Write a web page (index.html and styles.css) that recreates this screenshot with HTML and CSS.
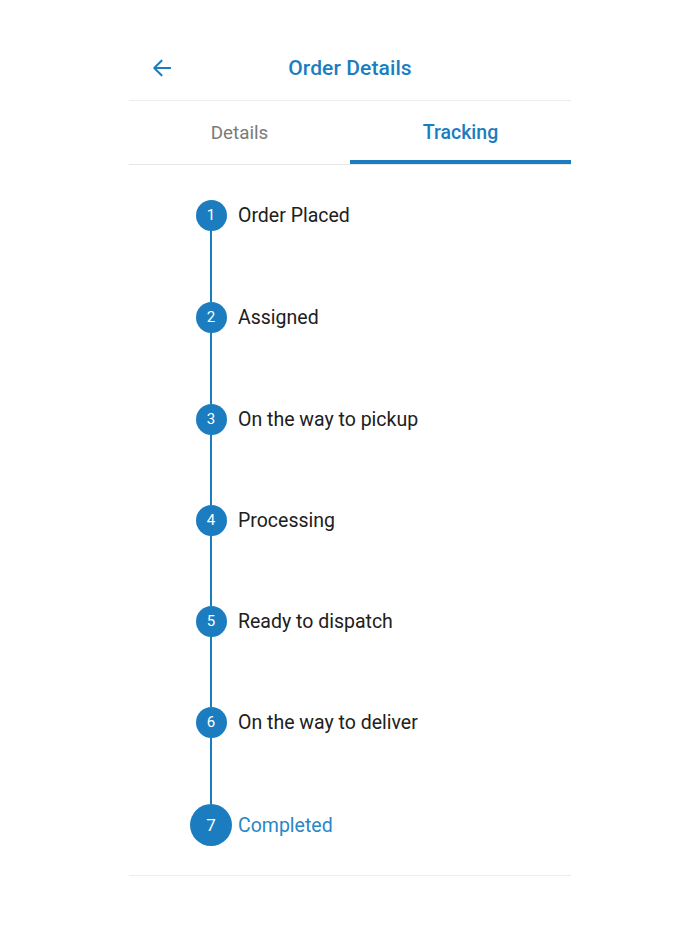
FILE: index.html
```html
<!DOCTYPE html>
<html>
<head>
<meta charset="utf-8">
<link rel="stylesheet" href="styles.css">
</head>
<body>
<div class="screen">
  <header class="topbar">
    <button class="back" aria-label="Back">
      <svg width="22" height="22" viewBox="0 0 24 24" fill="none" stroke="currentColor" stroke-width="2.2" stroke-linecap="round" stroke-linejoin="round"><path d="M21 12H3.5M11.5 4L3.5 12l8 8"/></svg>
    </button>
    <h1 class="title">Order Details</h1>
  </header>
  <nav class="tabs">
    <div class="tab">Details</div>
    <div class="tab active">Tracking</div>
  </nav>
  <ol class="steps">
    <li class="step"><span class="marker"><span class="dot">1</span></span><span class="label">Order Placed</span></li>
    <li class="connector"></li>
    <li class="step"><span class="marker"><span class="dot">2</span></span><span class="label">Assigned</span></li>
    <li class="connector"></li>
    <li class="step"><span class="marker"><span class="dot">3</span></span><span class="label">On the way to pickup</span></li>
    <li class="connector short"></li>
    <li class="step"><span class="marker"><span class="dot">4</span></span><span class="label">Processing</span></li>
    <li class="connector short"></li>
    <li class="step"><span class="marker"><span class="dot">5</span></span><span class="label">Ready to dispatch</span></li>
    <li class="connector short"></li>
    <li class="step"><span class="marker"><span class="dot">6</span></span><span class="label">On the way to deliver</span></li>
    <li class="connector last"></li>
    <li class="step current"><span class="marker"><span class="dot">7</span></span><span class="label">Completed</span></li>
  </ol>
</div>
</body>
</html>
```
FILE: styles.css
```css
* { box-sizing: border-box; }
html, body { margin: 0; padding: 0; background: #fff; }
body { font-family: Roboto, "Noto Sans", sans-serif; }

.screen {
  width: 442px;
  margin: 0 auto;
  padding-top: 36px;
}

.topbar {
  height: 65px;
  display: flex;
  align-items: center;
  justify-content: center;
  border-bottom: 1px solid #ececec;
  padding-bottom: 1px;
  position: relative;
}
.back {
  position: absolute;
  left: 22px;
  top: 21px;
  border: 0;
  background: none;
  padding: 0;
  color: #1b7dc0;
  display: flex;
}
.title {
  margin: 0;
  font-size: 21px;
  font-weight: 500;
  color: #1b7dc0;
  letter-spacing: 0.1px;
}

.tabs {
  display: grid;
  grid-template-columns: 1fr 1fr;
  height: 64px;
  border-bottom: 1px solid #e6e6e6;
}
.tab {
  display: flex;
  align-items: center;
  justify-content: center;
  font-size: 18.8px;
  color: #7a7a7a;
  padding-top: 1px;
}
.tab.active {
  color: #1b7dc0;
  font-weight: 500;
  font-size: 19.5px;
  border-bottom: 4px solid #1b7dc0;
  padding-top: 3px;
}

.steps {
  list-style: none;
  margin: 0;
  padding: 35px 0 0 61px;
  border-bottom: 1px solid #ececec;
  padding-bottom: 29px;
}
.step {
  display: flex;
  align-items: center;
  height: 30px;
}
.marker {
  width: 42px;
  display: flex;
  justify-content: center;
  align-items: center;
  flex: none;
}
.dot {
  width: 31px;
  height: 31px;
  border-radius: 50%;
  background: #1b7dc0;
  color: #fff;
  font-size: 15px;
  display: flex;
  align-items: center;
  justify-content: center;
}
.label {
  margin-left: 6px;
  font-size: 19.5px;
  color: #202020;
}
.connector {
  width: 2px;
  height: 72px;
  margin-left: 20px;
  background: #1b7dc0;
}
.connector.short { height: 71px; }
.connector.last { height: 67px; }
.step.current { height: 42px; }
.step.current .dot {
  width: 42px;
  height: 42px;
  font-size: 17px;
}
.step.current .label { color: #2a86c4; }
```
